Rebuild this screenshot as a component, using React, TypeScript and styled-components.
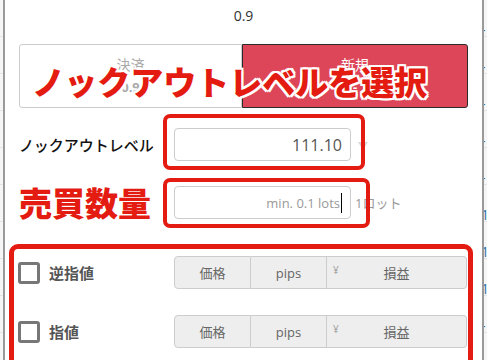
import styled, { createGlobalStyle } from "styled-components";

const GlobalStyle = createGlobalStyle`
  html, body {
    margin: 0;
    padding: 0;
    background: #f4f4f4;
  }
  body {
    font-family: "Open Sans", "Noto Sans CJK JP", sans-serif;
    color: #333;
  }
`;

const Page = styled.div`
  display: flex;
  width: 487px;
  height: 360px;
  overflow: hidden;
`;

const SideStrip = styled.div`
  width: 3px;
  flex-shrink: 0;
  background: repeating-linear-gradient(
    to bottom,
    #f6f6f6 0,
    #f6f6f6 36px,
    #e4e4e4 36px,
    #e4e4e4 37px
  );
  overflow: hidden;
  display: flex;
  flex-direction: column;
  padding-top: 22px;
  gap: 21px;
`;

const BlueMark = styled.span`
  display: block;
  height: 16px;
  font-size: 14px;
  line-height: 16px;
  color: #2f6fa8;
  margin-left: -3px;
`;

const Dialog = styled.div`
  flex: 1;
  min-width: 0;
  background: #fff;
  border-left: 2px solid #9a9a9a;
  border-right: 2px solid #9a9a9a;
  padding: 0 14px;
`;

const TopValue = styled.div`
  height: 32px;
  line-height: 32px;
  text-align: center;
  font-size: 14px;
  color: #333;
`;

const ToggleWrap = styled.div`
  position: relative;
  display: flex;
  margin-top: 12px;
  height: 64px;
`;

const ToggleButton = styled.div<{ $active?: boolean }>`
  flex: ${(p) => (p.$active ? "0 0 226px" : "1")};
  display: flex;
  flex-direction: column;
  align-items: center;
  justify-content: center;
  gap: 6px;
  box-sizing: border-box;
  border: 1px solid ${(p) => (p.$active ? "#2a2a2a" : "#cccccc")};
  border-radius: ${(p) => (p.$active ? "0 3px 3px 0" : "3px 0 0 3px")};
  background: ${(p) => (p.$active ? "#dd4659" : "#fff")};
  color: ${(p) => (p.$active ? "#fff" : "#aaa")};
  font-size: 14px;
  line-height: 16px;
`;

const SubValue = styled.span`
  font-size: 13px;
  font-weight: 700;
`;

const Callout = styled.div<{ $size: number }>`
  font-family: "Noto Sans CJK JP", sans-serif;
  font-weight: 900;
  font-size: ${(p) => p.$size}px;
  line-height: 1;
  color: #e41b10;
  white-space: nowrap;
  text-shadow:
    2px 0 0 #fff, -2px 0 0 #fff, 0 2px 0 #fff, 0 -2px 0 #fff,
    2px 2px 0 #fff, -2px -2px 0 #fff, 2px -2px 0 #fff, -2px 2px 0 #fff;
`;

const ToggleCallout = styled(Callout)`
  position: absolute;
  left: 13px;
  top: 21px;
`;

const FieldRow = styled.div<{ $top: number }>`
  display: flex;
  align-items: center;
  margin-top: ${(p) => p.$top}px;
  height: 33px;
`;

const FieldLabel = styled.div`
  width: 155px;
  flex-shrink: 0;
  font-size: 15px;
  font-weight: 500;
  color: #111;
`;

const InputWrap = styled.div`
  position: relative;
  width: 177px;
  height: 33px;
  flex-shrink: 0;
`;

const TextInput = styled.div<{ $placeholder?: boolean }>`
  box-sizing: border-box;
  height: 100%;
  border: 1px solid #cccccc;
  border-radius: 4px;
  display: flex;
  align-items: center;
  justify-content: flex-end;
  padding-right: 8px;
  font-size: ${(p) => (p.$placeholder ? 13 : 16)}px;
  color: ${(p) => (p.$placeholder ? "#999" : "#555")};
`;

const Caret = styled.span`
  display: inline-block;
  width: 1px;
  height: 20px;
  background: #000;
  margin-left: 1px;
`;

const Highlight = styled.div<{ $l: number; $t: number; $r: number; $b: number }>`
  position: absolute;
  left: ${(p) => p.$l}px;
  top: ${(p) => p.$t}px;
  right: ${(p) => p.$r}px;
  bottom: ${(p) => p.$b}px;
  border: 4px solid #e41b10;
  border-radius: 7px;
  pointer-events: none;
`;

const Triangle = styled.span`
  width: 0;
  height: 0;
  margin-left: 7px;
  margin-top: 2px;
  border-left: 5px solid transparent;
  border-right: 5px solid transparent;
  border-top: 8px solid #d9d9d9;
`;

const Unit = styled.span`
  margin-left: 4px;
  font-size: 13px;
  color: #999;
  white-space: nowrap;
`;

const OrderBox = styled.div`
  margin: 25px -5px 0 -10px;
  padding: 7px 1px 0 4px;
  height: 120px;
  border: 5px solid #e41b10;
  border-radius: 9px;
  display: flex;
  flex-direction: column;
  gap: 26px;
`;

const OrderRow = styled.div`
  display: flex;
  align-items: center;
  height: 33px;
`;

const Check = styled.span`
  width: 22px;
  height: 22px;
  box-sizing: border-box;
  border: 3px solid #777;
  border-radius: 3px;
  flex-shrink: 0;
`;

const OrderLabel = styled.span`
  width: 125px;
  flex-shrink: 0;
  margin-left: 9px;
  font-size: 15px;
  font-weight: 700;
  color: #555;
`;

const Group = styled.div`
  display: flex;
  width: 293px;
  height: 33px;
`;

const Cell = styled.div<{ $w: number; $first?: boolean; $last?: boolean }>`
  position: relative;
  width: ${(p) => p.$w}px;
  box-sizing: border-box;
  display: flex;
  align-items: center;
  justify-content: center;
  background: #eeeeee;
  border: 1px solid #cccccc;
  border-left-width: ${(p) => (p.$first ? 1 : 0)}px;
  border-radius: ${(p) => (p.$first ? "4px 0 0 4px" : p.$last ? "0 4px 4px 0" : "0")};
  font-size: 13px;
  color: #666;
`;

const Yen = styled.span`
  position: absolute;
  left: 6px;
  top: 6px;
  font-size: 10px;
  color: #999;
`;

const marks = ["-", "-", "-", "-", "-", "1", "1", "1", "-"];

function OrderLine({ label }: { label: string }) {
  return (
    <OrderRow>
      <Check />
      <OrderLabel>{label}</OrderLabel>
      <Group>
        <Cell $w={77} $first>価格</Cell>
        <Cell $w={76}>pips</Cell>
        <Cell $w={140} $last>
          <Yen>¥</Yen>
          損益
        </Cell>
      </Group>
    </OrderRow>
  );
}

export default function App() {
  return (
    <>
      <GlobalStyle />
      <Page>
        <SideStrip />
        <Dialog>
          <TopValue>0.9</TopValue>
          <ToggleWrap>
            <ToggleButton>
              決済
              <SubValue>0.9</SubValue>
            </ToggleButton>
            <ToggleButton $active>
              新規
              <SubValue>-</SubValue>
            </ToggleButton>
            <ToggleCallout $size={33}>ノックアウトレベルを選択</ToggleCallout>
          </ToggleWrap>

          <FieldRow $top={20}>
            <FieldLabel>ノックアウトレベル</FieldLabel>
            <InputWrap>
              <TextInput>111.10</TextInput>
              <Highlight $l={-11} $t={-14} $r={-14} $b={-9} />
            </InputWrap>
            <Triangle />
          </FieldRow>

          <FieldRow $top={25}>
            <FieldLabel>
              <Callout $size={33}>売買数量</Callout>
            </FieldLabel>
            <InputWrap>
              <TextInput $placeholder>
                min. 0.1 lots
                <Caret />
              </TextInput>
              <Highlight $l={-11} $t={-8} $r={-19} $b={-9} />
            </InputWrap>
            <Unit>1ロット</Unit>
          </FieldRow>

          <OrderBox>
            <OrderLine label="逆指値" />
            <OrderLine label="指値" />
          </OrderBox>
        </Dialog>
        <SideStrip>
          {marks.map((m, i) => (
            <BlueMark key={i}>{m}</BlueMark>
          ))}
        </SideStrip>
      </Page>
    </>
  );
}
